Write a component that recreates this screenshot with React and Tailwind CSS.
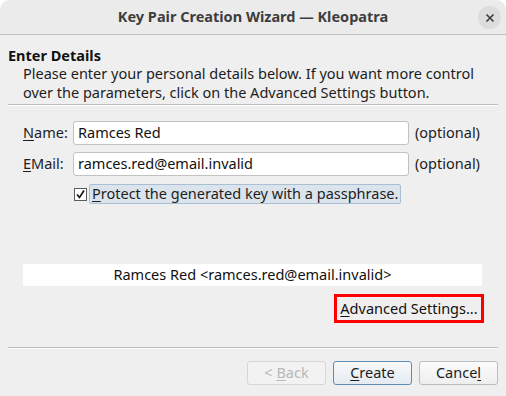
import React from 'react';

function Field({ label, accel, rest, value }) {
  return (
    <div className="flex h-[24px] items-center">
      <span className="w-[50px] text-[#1d1d1d]">
        <span className="underline underline-offset-2">{accel}</span>
        {rest}
      </span>
      <div className="flex h-[24px] w-[336px] items-center rounded-[3px] border border-[#c2c2c2] bg-white px-[4px] text-[#111]">
        {value}
      </div>
      <span className="ml-[6px] text-[#1d1d1d]">(optional)</span>
    </div>
  );
}

function Button({ children, primary, disabled }) {
  return (
    <button
      className={
        'flex h-[24px] w-[79px] items-center justify-center rounded-[3px] border ' +
        (primary
          ? 'border-[#5b8db8] bg-gradient-to-b from-[#f7f9fb] to-[#e4ebf1] text-[#1d1d1d]'
          : disabled
          ? 'border-[#d6d6d6] bg-[#f2f2f2] text-[#b8b8b8]'
          : 'border-[#bdbdbd] bg-gradient-to-b from-[#fbfbfb] to-[#eeeeee] text-[#1d1d1d]')
      }
    >
      {children}
    </button>
  );
}

export default function App() {
  return (
    <div
      className="flex h-[396px] w-[506px] flex-col overflow-hidden rounded-t-[10px] bg-[#efefef] text-[14.5px] text-[#1d1d1d]"
      style={{ fontFamily: '"Noto Sans", "DejaVu Sans", sans-serif' }}
    >
      <div className="relative flex h-[35px] shrink-0 items-center justify-center border-b border-[#bfbfbf] bg-[#ebebeb]">
        <span className="font-bold text-[#3d3d3d]">Key Pair Creation Wizard — Kleopatra</span>
        <div className="absolute right-[5px] top-[6px] flex h-[23px] w-[23px] items-center justify-center rounded-full bg-[#dcdcdc]">
          <svg width="10" height="10" viewBox="0 0 10 10">
            <path d="M1.5 1.5 L8.5 8.5 M8.5 1.5 L1.5 8.5" stroke="#3a3a3a" strokeWidth="1.6" />
          </svg>
        </div>
      </div>

      <div className="flex flex-1 flex-col px-[8px]">
        <div className="mt-[11px] font-bold leading-[18px] text-[#111]">Enter Details</div>
        <div className="pl-[15px] leading-[19px] text-[#1d1d1d]">
          <div>Please enter your personal details below. If you want more control</div>
          <div>over the parameters, click on the Advanced Settings button.</div>
        </div>
        <div className="mt-[2px] h-[2px] border-t border-[#bcbcbc] bg-white" />

        <div className="mt-[15px] flex flex-col gap-[7px] pl-[15px]">
          <Field accel="N" rest="ame:" value="Ramces Red" />
          <Field accel="E" rest="Mail:" value="ramces.red@email.invalid" />
        </div>

        <div className="mt-[8px] flex items-center pl-[66px]">
          <div className="flex h-[13px] w-[13px] items-center justify-center border border-[#5c5c5c] bg-white">
            <svg width="11" height="11" viewBox="0 0 11 11">
              <path d="M2 5.5 L4.5 8.5 L9 1.5" stroke="#111" strokeWidth="1.6" fill="none" />
            </svg>
          </div>
          <div className="ml-[2px] flex h-[20px] items-center rounded-[2px] border border-[#a9bfd3] bg-[#dbe4ec] px-[2px]">
            <span className="underline underline-offset-2">P</span>rotect the generated key with a passphrase.
          </div>
        </div>

        <div className="mt-[60px] ml-[15px] flex h-[22px] w-[459px] items-center justify-center bg-white text-[#111]">
          Ramces Red &lt;ramces.red@email.invalid&gt;
        </div>

        <div className="mt-[8px] flex justify-end pr-[14px]">
          <div className="flex h-[29px] w-[150px] items-center justify-center border-[3px] border-[#ff0000] text-[#111]">
            <span className="underline underline-offset-2">A</span>dvanced Settings...
          </div>
        </div>

        <div className="mt-[24px] h-[2px] border-t border-[#bcbcbc] bg-white" />

        <div className="mt-[12px] flex justify-end gap-[7px]">
          <Button disabled>
            &lt;&nbsp;<span className="underline underline-offset-2">B</span>ack
          </Button>
          <Button primary>
            <span className="underline underline-offset-2">C</span>reate
          </Button>
          <Button>
            Cance<span className="underline underline-offset-2">l</span>
          </Button>
        </div>
      </div>
    </div>
  );
}
